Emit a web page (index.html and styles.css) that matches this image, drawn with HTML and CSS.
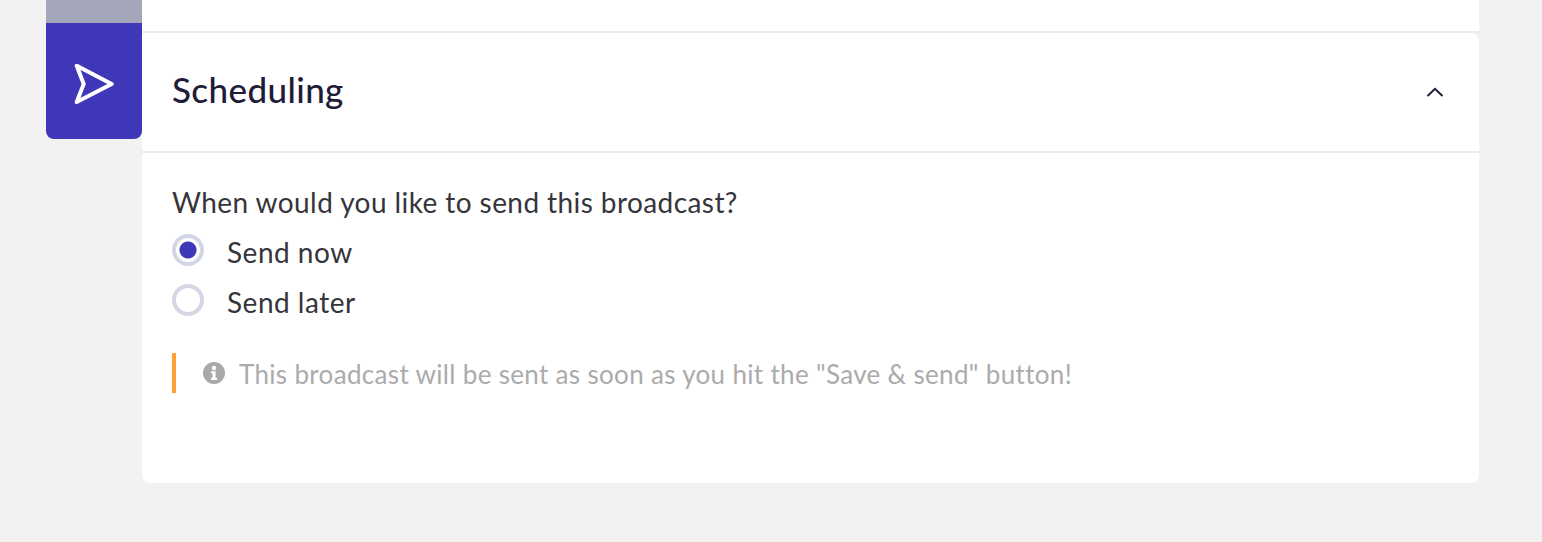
FILE: index.html
```html
<!DOCTYPE html>
<html lang="en">
<head>
<meta charset="utf-8">
<title>Scheduling</title>
<link rel="stylesheet" href="styles.css">
</head>
<body>
<div class="page">
  <div class="tabs">
    <div class="tab-prev"></div>
    <div class="tab-active">
      <svg class="send-icon" width="40" height="40" viewBox="0 0 40 40" fill="none" stroke="#fff" stroke-width="4" stroke-linejoin="round">
        <path d="M2.7 1.7 L37.7 20 L2.7 38 L9.7 20 Z"/>
      </svg>
    </div>
  </div>
  <div class="main">
    <div class="card-prev"></div>
    <section class="card">
      <header class="card-head">
        <h2 class="title">Scheduling</h2>
        <svg class="chevron" width="18" height="10" viewBox="0 0 18 10" fill="none" stroke="#1f1c3a" stroke-width="2">
          <path d="M1.5 9 L9 1.8 L16.5 9"/>
        </svg>
      </header>
      <div class="card-body">
        <p class="question">When would you like to send this broadcast?</p>
        <div class="radio-group">
          <div class="radio-row"><span class="radio radio-on"></span><span class="radio-label">Send now</span></div>
          <div class="radio-row"><span class="radio"></span><span class="radio-label">Send later</span></div>
        </div>
        <div class="note">
          <svg class="info" width="22" height="22" viewBox="0 0 22 22">
            <circle cx="11" cy="11" r="11" fill="#a9a9a9"/>
            <circle cx="11" cy="6" r="2.2" fill="#fff"/>
            <path d="M8 9.2h4.6v6.6H14.2v2.2H8v-2.2h1.6v-4.4H8z" fill="#fff"/>
          </svg>
          <span class="note-text">This broadcast will be sent as soon as you hit the "Save &amp; send" button!</span>
        </div>
      </div>
    </section>
  </div>
</div>
</body>
</html>
```
FILE: styles.css
```css
* { box-sizing: border-box; }
html, body { margin: 0; height: 100%; }
body {
  background: #f2f2f2;
  font-family: "Lato", "Open Sans", sans-serif;
  overflow: hidden;
}
.page {
  display: flex;
  padding: 0 63px 0 46px;
}
.tabs { width: 96px; flex: none; }
.tab-prev { height: 23px; background: #a3a5b8; }
.tab-active {
  height: 116px;
  background: #3e37b8;
  border-radius: 0 0 8px 8px;
  padding: 41px 0 0 28px;
}
.send-icon { display: block; }
.main { flex: 1; min-width: 0; }
.card-prev {
  height: 33px;
  background: #fff;
  border-bottom: 2px solid #ececec;
}
.card {
  height: 450px;
  background: #fff;
  border-radius: 0 8px 8px 8px;
}
.card-head {
  height: 120px;
  padding: 0 35px 6px 30px;
  display: flex;
  align-items: center;
  justify-content: space-between;
  border-bottom: 2px solid #ececec;
}
.title {
  margin: 0;
  font-size: 35px;
  font-weight: 500;
  letter-spacing: 0.4px;
  color: #1f1c3a;
}
.chevron { display: block; margin-top: 6px; }
.card-body { padding: 32px 30px 0; }
.question {
  margin: 0;
  font-size: 28px;
  line-height: 34px;
  letter-spacing: 0.42px;
  color: #35353b;
}
.radio-group { margin-top: 6px; }
.radio-row {
  display: flex;
  align-items: center;
  height: 50px;
  gap: 23px;
}
.radio {
  width: 32px;
  height: 32px;
  border-radius: 50%;
  border: 4px solid #d3d6e4;
  background: #fff;
  flex: none;
}
.radio-on {
  background: radial-gradient(circle, #3e37b8 0 8px, #fff 9px);
}
.radio-label {
  font-size: 28px;
  line-height: 34px;
  letter-spacing: 0.5px;
  padding-top: 3px;
  color: #35353b;
}
.note {
  margin-top: 28px;
  height: 40px;
  border-left: 4px solid #ffa233;
  padding-left: 27px;
  display: flex;
  align-items: center;
  gap: 14px;
}
.info { display: block; flex: none; }
.note-text {
  font-size: 26px;
  line-height: 34px;
  letter-spacing: 0.33px;
  padding-top: 2px;
  color: #ababab;
}
```
